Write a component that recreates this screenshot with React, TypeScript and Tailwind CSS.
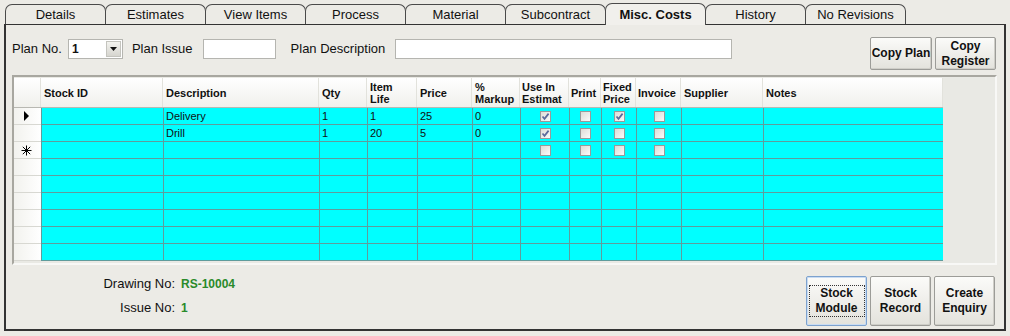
import React from 'react'

type Col = { key: string; label: string[]; w: number; check?: boolean }

const cols: Col[] = [
    { key: 'stock', label: ['Stock ID'], w: 122 },
    { key: 'desc', label: ['Description'], w: 156 },
    { key: 'qty', label: ['Qty'], w: 48 },
    { key: 'life', label: ['Item', 'Life'], w: 50 },
    { key: 'price', label: ['Price'], w: 55 },
    { key: 'markup', label: ['%', 'Markup'], w: 48 },
    { key: 'use', label: ['Use In', 'Estimat'], w: 49, check: true },
    { key: 'print', label: ['Print'], w: 32, check: true },
    { key: 'fixed', label: ['Fixed', 'Price'], w: 35, check: true },
    { key: 'invoice', label: ['Invoice'], w: 45, check: true },
    { key: 'supplier', label: ['Supplier'], w: 82 },
    { key: 'notes', label: ['Notes'], w: 180 },
]

type Row = Record<string, string | boolean> | null

const rows: Row[] = [
    { desc: 'Delivery', qty: '1', life: '1', price: '25', markup: '0', use: true, print: false, fixed: true, invoice: false },
    { desc: 'Drill', qty: '1', life: '20', price: '5', markup: '0', use: true, print: false, fixed: false, invoice: false },
    { use: false, print: false, fixed: false, invoice: false },
    null, null, null, null, null, null,
]

const tabs = ['Details', 'Estimates', 'View Items', 'Process', 'Material', 'Subcontract', 'Misc. Costs', 'History', 'No Revisions']

function CheckBox({ checked }: { checked: boolean }) {
    return (
        <div className="w-[11px] h-[11px] border border-[#9a9a9a] bg-gradient-to-br from-[#dcdcd6] to-[#fafafa] flex items-center justify-center">
            {checked && (
                <svg width="9" height="9" viewBox="0 0 9 9">
                    <path d="M1.5 4.5 L3.5 6.8 L7.6 1.6" fill="none" stroke="#5c6b9c" strokeWidth="1.7" />
                </svg>
            )}
        </div>
    )
}

function Btn({ lines, focus, w, h }: { lines: string[]; focus?: boolean; w: string; h: string }) {
    return (
        <button
            type="button"
            className={`${w} ${h} rounded-[2px] border bg-gradient-to-b from-[#fbfbf9] to-[#e3e2dc] flex flex-col items-center justify-center text-[12px] font-bold leading-[15px] text-[#111] whitespace-nowrap ${focus ? 'border-[#7da2ce] shadow-[inset_0_0_0_1px_#c9dcf3]' : 'border-[#9c9c98] shadow-[inset_-1px_-1px_0_#cfcec8]'}`}
        >
            <div className={`flex flex-col items-center ${focus ? 'outline outline-1 outline-dotted outline-[#333] px-[6px]' : ''}`}>
                {lines.map((l) => (
                    <span key={l}>{l}</span>
                ))}
            </div>
        </button>
    )
}

export default function App() {
    return (
        <div className="w-[1010px] h-[336px] bg-[#ecebe6] font-['Liberation_Sans',Arial,sans-serif] text-[#111] overflow-hidden">
            <div className="flex items-end h-[24px] pl-[5px] pt-[3px]">
                {tabs.map((t) => {
                    const active = t === 'Misc. Costs'
                    return (
                        <div
                            key={t}
                            className={`w-[101px] -mr-px border border-b-0 border-[#4a4a4a] rounded-t-[7px] text-center text-[13px] ${active ? 'h-[22px] leading-[22px] bg-[#f1f0ec] font-bold relative z-10 -mb-px' : 'h-[20px] leading-[19px] bg-[#ecebe6]'}`}
                        >
                            {t}
                        </div>
                    )
                })}
            </div>
            <div className="ml-[4px] w-[1002px] h-[307px] border-2 border-[#333] border-t border-l-2 bg-[#ecebe6] pl-[6px] pr-[8px] pt-[12px]">
                <div className="flex items-start h-[34px]">
                    <div className="flex items-center h-[21px] mt-[1px] text-[13px]">
                        <span>Plan No.</span>
                        <div className="ml-[6px] w-[55px] h-[20px] border border-[#b5b5b0] bg-white flex items-center">
                            <span className="pl-[3px] text-[12px] font-bold flex-1">1</span>
                            <div className="w-[15px] h-[16px] mr-[1px] bg-gradient-to-b from-[#f3f3ef] to-[#d6d5cf] border border-[#c4c4be] flex items-center justify-center">
                                <svg width="7" height="4" viewBox="0 0 7 4">
                                    <path d="M0 0 H7 L3.5 4 Z" fill="#111" />
                                </svg>
                            </div>
                        </div>
                        <span className="ml-[9px]">Plan Issue</span>
                        <div className="ml-[10px] w-[73px] h-[20px] border border-[#b5b5b0] bg-white" />
                        <span className="ml-[15px]">Plan Description</span>
                        <div className="ml-[10px] w-[337px] h-[20px] border border-[#b5b5b0] bg-white" />
                    </div>
                    <div className="ml-auto flex gap-[3px]">
                        <Btn lines={['Copy Plan']} w="w-[62px]" h="h-[33px]" />
                        <Btn lines={['Copy', 'Register']} w="w-[61px]" h="h-[33px]" />
                    </div>
                </div>
                <div className="mt-[4px] w-[985px] h-[190px] border-2 border-[#a8a7a0] border-r-[#f8f8f6] border-b-[#f8f8f6] bg-[#e9e9e4] pt-px">
                    <div className="flex h-[29px] bg-gradient-to-b from-white to-[#f0f0ec] w-[929px]">
                        <div className="w-[27px] border-r border-[#e2e2dc]" />
                        {cols.map((c) => (
                            <div
                                key={c.key}
                                style={{ width: c.w }}
                                className={`h-full border-r border-[#e2e2dc] text-[11px] font-bold leading-[12px] flex flex-col justify-center ${c.check ? 'pl-[2px]' : 'pl-[3px]'}`}
                            >
                                {c.label.map((l) => (
                                    <span key={l} className="whitespace-nowrap">{l}</span>
                                ))}
                            </div>
                        ))}
                    </div>
                    <div className="w-[929px] border-t border-[#b8b8b2]">
                        {rows.map((r, i) => (
                            <div key={i} className="flex h-[17px]">
                                <div className="w-[27px] h-full bg-gradient-to-r from-[#f2f2ee] to-white border-b border-[#d8d8d2] flex items-center justify-center">
                                    {i === 0 && (
                                        <svg width="7" height="10" viewBox="0 0 7 10" className="ml-[-2px]">
                                            <path d="M1 0 L6 5 L1 10 Z" fill="#000" />
                                        </svg>
                                    )}
                                    {i === 2 && (
                                        <svg width="11" height="11" viewBox="0 0 11 11" className="ml-[-2px]">
                                            <path d="M5.5 0.5 V10.5 M0.5 5.5 H10.5 M1.8 1.8 L9.2 9.2 M9.2 1.8 L1.8 9.2" stroke="#000" strokeWidth="1" />
                                        </svg>
                                    )}
                                </div>
                                {cols.map((c) => {
                                    const v = r ? r[c.key] : undefined
                                    return (
                                        <div
                                            key={c.key}
                                            style={{ width: c.w }}
                                            className={`h-full bg-[#00ffff] border-l border-b border-[#5f9c9c] text-[11px] leading-[16px] ${c.check ? 'flex items-center justify-center' : 'pl-[2px]'}`}
                                        >
                                            {c.check ? (typeof v === 'boolean' ? <CheckBox checked={v} /> : null) : (v as string) || ''}
                                        </div>
                                    )
                                })}
                            </div>
                        ))}
                    </div>
                </div>
                <div className="flex mt-[9px]">
                    <div className="w-[163px] flex flex-col items-end text-[13px] leading-[16px] gap-[8px] pt-[2px]">
                        <span>Drawing No:</span>
                        <span>Issue No:</span>
                    </div>
                    <div className="pl-[6px] flex flex-col text-[12px] font-bold text-[#2a8a2a] leading-[16px] gap-[8px] pt-[2px]">
                        <span>RS-10004</span>
                        <span>1</span>
                    </div>
                    <div className="ml-auto flex gap-[3px] mr-[1px] mt-[2px]">
                        <Btn lines={['Stock', 'Module']} focus w="w-[61px]" h="h-[50px]" />
                        <Btn lines={['Stock', 'Record']} w="w-[61px]" h="h-[50px]" />
                        <Btn lines={['Create', 'Enquiry']} w="w-[61px]" h="h-[50px]" />
                    </div>
                </div>
            </div>
        </div>
    )
}
